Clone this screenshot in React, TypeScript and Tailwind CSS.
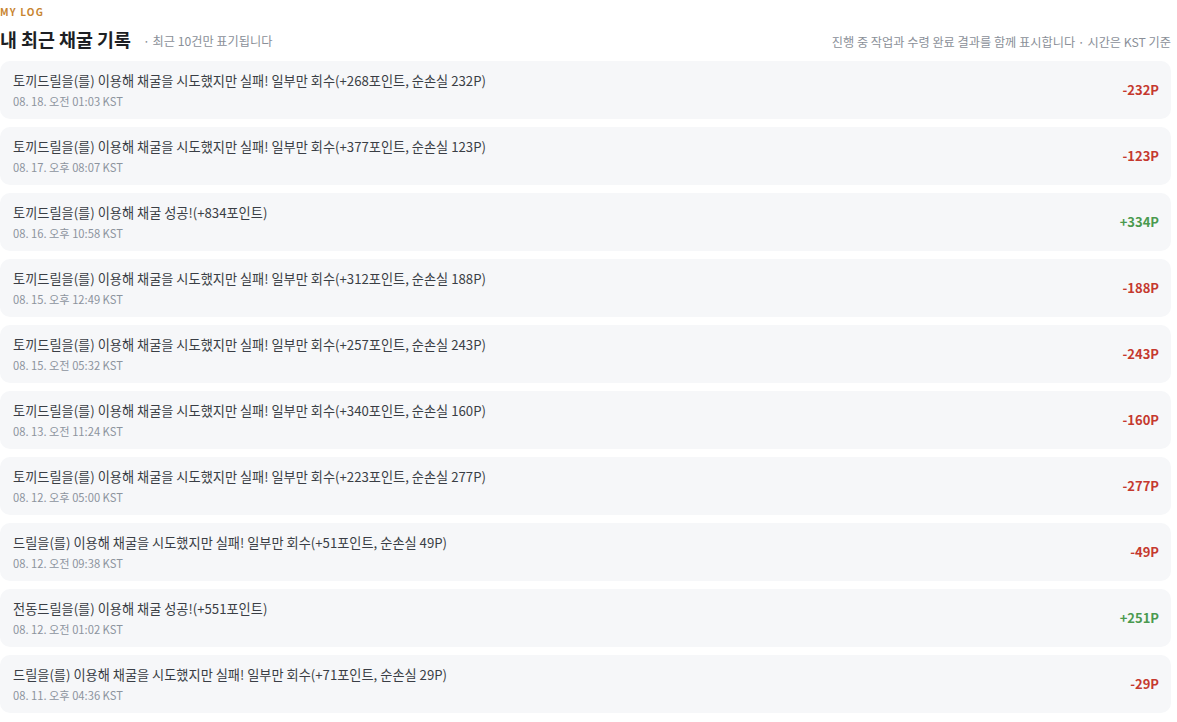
import React from "react";

const rows = [
  { t: "토끼드릴을(를) 이용해 채굴을 시도했지만 실패! 일부만 회수(+268포인트, 순손실 232P)", d: "08. 18. 오전 01:03 KST", a: "-232P" },
  { t: "토끼드릴을(를) 이용해 채굴을 시도했지만 실패! 일부만 회수(+377포인트, 순손실 123P)", d: "08. 17. 오후 08:07 KST", a: "-123P" },
  { t: "토끼드릴을(를) 이용해 채굴 성공!(+834포인트)", d: "08. 16. 오후 10:58 KST", a: "+334P" },
  { t: "토끼드릴을(를) 이용해 채굴을 시도했지만 실패! 일부만 회수(+312포인트, 순손실 188P)", d: "08. 15. 오후 12:49 KST", a: "-188P" },
  { t: "토끼드릴을(를) 이용해 채굴을 시도했지만 실패! 일부만 회수(+257포인트, 순손실 243P)", d: "08. 15. 오전 05:32 KST", a: "-243P" },
  { t: "토끼드릴을(를) 이용해 채굴을 시도했지만 실패! 일부만 회수(+340포인트, 순손실 160P)", d: "08. 13. 오전 11:24 KST", a: "-160P" },
  { t: "토끼드릴을(를) 이용해 채굴을 시도했지만 실패! 일부만 회수(+223포인트, 순손실 277P)", d: "08. 12. 오후 05:00 KST", a: "-277P" },
  { t: "드릴을(를) 이용해 채굴을 시도했지만 실패! 일부만 회수(+51포인트, 순손실 49P)", d: "08. 12. 오전 09:38 KST", a: "-49P" },
  { t: "전동드릴을(를) 이용해 채굴 성공!(+551포인트)", d: "08. 12. 오전 01:02 KST", a: "+251P" },
  { t: "드릴을(를) 이용해 채굴을 시도했지만 실패! 일부만 회수(+71포인트, 순손실 29P)", d: "08. 11. 오후 04:36 KST", a: "-29P" },
];

export default function App() {
  return (
    <div
      className="w-[1171px] bg-white"
      style={{ fontFamily: '"Noto Sans CJK KR", "Noto Sans", sans-serif' }}
    >
      <div className="pt-[5px] text-[10px] font-bold tracking-[0.12em] leading-[14px] text-[#c8842f]">MY LOG</div>
      <div className="flex items-end justify-between mt-[7.5px] mb-[10px]">
        <div className="flex items-end gap-[12px]">
          <h1 className="text-[18.4px] font-bold leading-[24px] text-[#1d1f24]">내 최근 채굴 기록</h1>
          <span className="text-[12.2px] leading-[20px] text-[#8a8f98]">· 최근 10건만 표기됩니다</span>
        </div>
        <span className="text-[12.2px] leading-[18px] text-[#8a8f98]">진행 중 작업과 수령 완료 결과를 함께 표시합니다 · 시간은 KST 기준</span>
      </div>
      <div className="flex flex-col gap-[8px]">
        {rows.map((r, i) => (
          <div key={i} className="flex items-center justify-between rounded-[10px] bg-[#f6f7f9] pl-[13px] pr-[12px] h-[58px]">
            <div className="flex flex-col">
              <div className="text-[13.2px] leading-[20px] text-[#3a3e45]">{r.t}</div>
              <div className="text-[11.2px] leading-[16px] text-[#8d949e] mt-[2px]">{r.d}</div>
            </div>
            <div className={`text-[13px] font-bold ${r.a.startsWith("+") ? "text-[#4a9a4f]" : "text-[#c5392f]"}`}>{r.a}</div>
          </div>
        ))}
      </div>
    </div>
  );
}
